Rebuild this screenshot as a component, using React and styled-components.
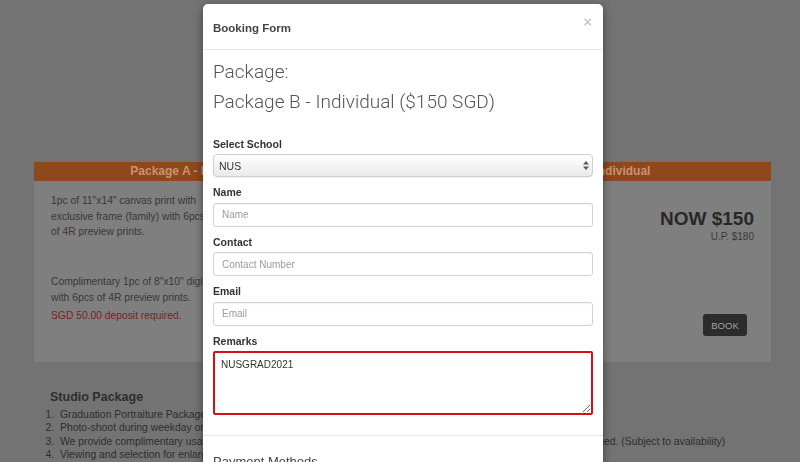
import React from "react";
import styled, { createGlobalStyle } from "styled-components";

const Global = createGlobalStyle`
  html, body { margin: 0; padding: 0; height: 100%; overflow: hidden; }
  body { font-family: "Liberation Sans", Arial, sans-serif; background: #737373; }
  * { box-sizing: border-box; }
`;

const Page = styled.div`
  min-height: 462px;
  background: #737373;
  padding-top: 162px;
  color: #333;
`;

const Card = styled.section`
  margin-left: 34px;
  width: 737px;
`;

const HeaderRow = styled.div`
  display: grid;
  grid-template-columns: 1fr 1fr;
  height: 19px;
  background: #8f471c;
`;

const HeaderCell = styled.div`
  text-align: center;
  font-weight: bold;
  font-size: 12px;
  line-height: 19px;
  color: #c99272;
`;

const CardBody = styled.div`
  display: grid;
  grid-template-columns: 1fr 1fr;
  min-height: 181px;
  background: #7f7f7f;
`;

const Pkg = styled.div`
  display: grid;
  grid-template-columns: 1fr 1fr;
`;

const Desc = styled.div`
  padding: 12px 0 0 17px;
  font-size: 10.3px;
  line-height: 15.5px;
  color: #383838;
`;

const DescP = styled.p`
  margin: 0 0 ${(p) => p.$mb || 0}px;
  color: ${(p) => (p.$red ? "#7a2222" : "inherit")};
`;

const Price = styled.div`
  display: flex;
  flex-direction: column;
  align-items: flex-end;
  padding: 27px 17px 0 0;
`;

const Now = styled.div`
  font-weight: bold;
  font-size: 19px;
  line-height: 22px;
  color: #282828;
`;

const Up = styled.div`
  font-size: 10px;
  line-height: 14px;
  color: #3a3a3a;
`;

const BookBtn = styled.button`
  margin: 70px 7px 0 0;
  width: 44px;
  height: 22px;
  border: 0;
  border-radius: 3px;
  background: #2c2c2c;
  color: #a0a0a0;
  font-family: "Liberation Sans", Arial, sans-serif;
  font-size: 9.5px;
  padding: 0;
`;

const Studio = styled.div`
  margin-top: 28px;
  padding-left: 50px;
  color: #2e2e2e;
`;

const StudioTitle = styled.h4`
  margin: 0 0 3px;
  font-size: 12.5px;
  line-height: 15px;
  font-weight: bold;
`;

const List = styled.ol`
  margin: 0;
  padding-left: 7px;
  font-size: 10.4px;
  line-height: 13.3px;
  li { padding-left: 3px; }
`;

const Backdrop = styled.div`
  position: fixed;
  inset: 0;
  display: flex;
  justify-content: center;
  padding-left: 6px;
  padding-top: 4px;
`;

const Modal = styled.div`
  width: 400px;
  height: 520px;
  background: #fff;
  border-radius: 5px;
  box-shadow: 0 3px 10px rgba(0, 0, 0, 0.45);
  overflow: hidden;
`;

const ModalHeader = styled.div`
  display: flex;
  justify-content: space-between;
  align-items: flex-start;
  padding: 17px 11px 13px 10px;
  border-bottom: 1px solid #e8e8e8;
`;

const ModalTitle = styled.h4`
  margin: 0;
  font-size: 11.5px;
  line-height: 15px;
  font-weight: bold;
  color: #444;
`;

const Close = styled.span`
  font-size: 15px;
  line-height: 13px;
  font-weight: bold;
  color: #c8c8c8;
  margin-top: -6px;
`;

const ModalBody = styled.div`
  padding: 7px 10px 0;
`;

const PkgTitle = styled.h3`
  margin: 0 0 19.5px;
  font-family: Roboto, "Liberation Sans", sans-serif;
  font-weight: 300;
  font-size: 19px;
  line-height: 30px;
  color: #555;
`;

const Group = styled.div`
  margin-bottom: 8px;
`;

const Label = styled.label`
  display: block;
  font-size: 10.5px;
  line-height: 15px;
  font-weight: bold;
  color: #333;
  margin-bottom: 2.5px;
`;

const SelectWrap = styled.div`
  position: relative;
`;

const Select = styled.select`
  appearance: none;
  -webkit-appearance: none;
  display: block;
  width: 100%;
  height: 23px;
  padding: 0 5px;
  border: 1px solid #d0d0d0;
  border-radius: 4px;
  background: linear-gradient(#ffffff, #e9e9e9);
  box-shadow: 0 1px 1px rgba(0, 0, 0, 0.06);
  font-family: "Liberation Sans", Arial, sans-serif;
  font-size: 10.5px;
  color: #333;
  outline: none;
`;

const Arrows = styled.svg`
  position: absolute;
  right: 4px;
  top: 7px;
  pointer-events: none;
`;

const Input = styled.input`
  display: block;
  width: 100%;
  height: 24px;
  padding: 0 8px;
  border: 1px solid #d2d2d2;
  border-radius: 3px;
  font-family: "Liberation Sans", Arial, sans-serif;
  font-size: 10px;
  color: #333;
  outline: none;
  box-shadow: inset 0 1px 1px rgba(0, 0, 0, 0.04);
  &::placeholder { color: #9a9a9a; }
`;

const Textarea = styled.textarea`
  display: block;
  width: 100%;
  height: 64px;
  padding: 4px 6px;
  border: 2px solid #d6101a;
  border-radius: 2px;
  font-family: "Liberation Sans", Arial, sans-serif;
  font-size: 10px;
  line-height: 15px;
  color: #333;
  outline: none;
  resize: vertical;
`;

const Divider = styled.hr`
  margin: 20px -10px 18px;
  border: 0;
  border-top: 1px solid #e8e8e8;
`;

const SectionTitle = styled.h4`
  margin: 0;
  font-size: 13px;
  line-height: 16px;
  font-weight: normal;
  color: #444;
`;

export default function App() {
  return (
    <>
      <Global />
      <Page>
        <Card>
          <HeaderRow>
            <HeaderCell>Package A - Individual (Family)</HeaderCell>
            <HeaderCell>Package B - Individual</HeaderCell>
          </HeaderRow>
          <CardBody>
            <Pkg>
              <Desc>
                <DescP $mb={34.5}>
                  1pc of 11"x14" canvas print with
                  <br />
                  exclusive frame (family) with 6pcs
                  <br />
                  of 4R preview prints.
                </DescP>
                <DescP $mb={3}>
                  Complimentary 1pc of 8"x10" digital
                  <br />
                  with 6pcs of 4R preview prints.
                </DescP>
                <DescP $red>SGD 50.00 deposit required.</DescP>
              </Desc>
              <Price>
                <Now>NOW $250</Now>
                <Up>U.P. $300</Up>
                <BookBtn>BOOK</BookBtn>
              </Price>
            </Pkg>
            <Pkg>
              <Desc>
                <DescP $mb={34.5}>
                  1pc of 8"x10" canvas print with
                  <br />
                  exclusive frame with 4pcs
                  <br />
                  of 4R preview prints.
                </DescP>
                <DescP $red>SGD 50.00 deposit required.</DescP>
              </Desc>
              <Price>
                <Now>NOW $150</Now>
                <Up>U.P. $180</Up>
                <BookBtn>BOOK</BookBtn>
              </Price>
            </Pkg>
          </CardBody>
        </Card>
        <Studio>
          <StudioTitle>Studio Package</StudioTitle>
          <List>
            <li>Graduation Portraiture Package (on studio)</li>
            <li>Photo-shoot during weekday or weekend</li>
            <li>
              We provide complimentary usage of graduation gowns, mortarboards and props, and the backdrop color can be changed. (Subject to availability)
            </li>
            <li>Viewing and selection for enlargement</li>
          </List>
        </Studio>
      </Page>
      <Backdrop>
        <Modal>
          <ModalHeader>
            <ModalTitle>Booking Form</ModalTitle>
            <Close>×</Close>
          </ModalHeader>
          <ModalBody>
            <PkgTitle>
              Package:
              <br />
              Package B - Individual ($150 SGD)
            </PkgTitle>
            <Group>
              <Label>Select School</Label>
              <SelectWrap>
                <Select defaultValue="NUS">
                  <option>NUS</option>
                  <option>NTU</option>
                  <option>SMU</option>
                </Select>
                <Arrows width="6" height="9" viewBox="0 0 6 9">
                  <polygon points="0,3.5 3,0 6,3.5" fill="#555" />
                  <polygon points="0,5.5 3,9 6,5.5" fill="#555" />
                </Arrows>
              </SelectWrap>
            </Group>
            <Group>
              <Label>Name</Label>
              <Input placeholder="Name" />
            </Group>
            <Group>
              <Label>Contact</Label>
              <Input placeholder="Contact Number" />
            </Group>
            <Group>
              <Label>Email</Label>
              <Input placeholder="Email" />
            </Group>
            <Group>
              <Label>Remarks</Label>
              <Textarea readOnly value="NUSGRAD2021" />
            </Group>
            <Divider />
            <SectionTitle>Payment Methods</SectionTitle>
          </ModalBody>
        </Modal>
      </Backdrop>
    </>
  );
}
